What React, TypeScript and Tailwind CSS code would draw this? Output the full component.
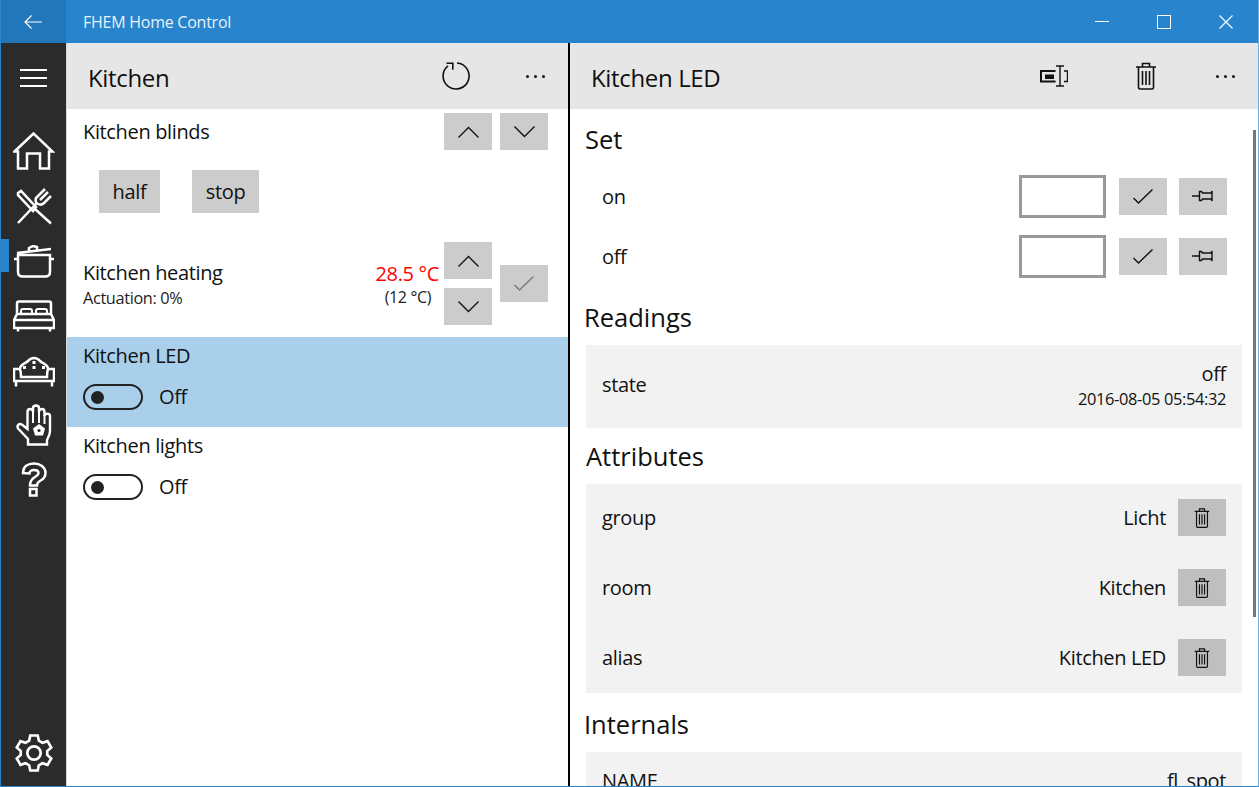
import { ReactNode } from "react";

const font = "font-['Open_Sans','Noto_Sans',sans-serif]";

const Icon = ({ className, children, vb = "0 0 48 48" }: { className: string; children: ReactNode; vb?: string }) => (
  <svg viewBox={vb} fill="none" stroke="currentColor" className={className}>
    {children}
  </svg>
);

const TrashIcon = ({ className }: { className: string }) => (
  <Icon className={className} vb="0 0 22 28">
    <path strokeWidth="1.6" d="M1 5h20M7.500 5V1.500h7V5M3.500 5v20.500a1.500 1.500 0 0 0 1.500 1.500h12a1.500 1.500 0 0 0 1.500-1.500V5" />
    <path strokeWidth="1.6" d="M7.500 9v14M11 9v14M14.500 9v14" />
  </Icon>
);

const PinIcon = () => (
  <Icon className="w-[22px] h-[14px]" vb="0 0 22 14">
    <path strokeWidth="1.4" d="M0 7h7M7.500 2.500h2l1 1.500h8.500l1-2v10l-1-2h-8.500l-1 1.500h-2z" />
  </Icon>
);

const CheckIcon = ({ muted }: { muted?: boolean }) => (
  <Icon className={`w-[20px] h-[15px] ${muted ? "text-[#7a7a7a]" : ""}`} vb="0 0 20 15">
    <path strokeWidth="1.4" d="M0.500 9l5 5L19.500 0.500" />
  </Icon>
);

const Chevron = ({ up }: { up?: boolean }) => (
  <Icon className="w-[21px] h-[12px]" vb="0 0 21 12">
    <path strokeWidth="1.4" d={up ? "M0.500 11.500l10-10 10 10" : "M0.500 0.500l10 10 10-10"} />
  </Icon>
);

const GreyButton = ({ children, className = "bg-[#cccccc]" }: { children: ReactNode; className?: string }) => (
  <div className={`w-12 h-[37px] flex items-center justify-center shrink-0 ${className}`}>{children}</div>
);

const Dots = () => (
  <div className="flex gap-[5px]">
    <span className="w-[3px] h-[3px] rounded-full bg-[#111]" />
    <span className="w-[3px] h-[3px] rounded-full bg-[#111]" />
    <span className="w-[3px] h-[3px] rounded-full bg-[#111]" />
  </div>
);

const Toggle = () => (
  <div className="flex items-center gap-[16px]">
    <div className="w-[60px] h-[26px] rounded-full border-[2.500px] border-[#222] flex items-center pl-[6px]">
      <span className="w-[13px] h-[13px] rounded-full bg-[#222]" />
    </div>
    <span className="text-[20px] leading-none text-[#111]">Off</span>
  </div>
);

const sw = "2.5";

const HomeIcon = () => (
  <Icon className="w-[42px] h-[38px]" vb="0 0 42 38">
    <path strokeWidth={sw} d="M1.500 19.500L20.500 1.500l19 18H36v17h-9V21.500H14v15H5v-17z" />
  </Icon>
);

const FoodIcon = () => (
  <Icon className="w-[36px] h-[37px] mt-[18px]" vb="0 0 36 37">
    <path strokeWidth={sw} d="M2 5l3-2 15 16-3 4L2 7zM19 21l16 14.500" />
    <path strokeWidth={sw} d="M29 1l-9 9c-1 3 0 5 2 6s4 1 6-1l7-7M32 4l-8 8M21 15L2 35" />
  </Icon>
);

const PotIcon = () => (
  <Icon className="w-[40px] h-[33px] mt-[20px]" vb="0 0 40 33">
    <path strokeWidth={sw} d="M4 10h32v17c0 3-2 4.500-5 4.500H9c-3 0-5-1.500-5-4.500zM0 14h4M36 14h4M3 8l34-4M15 6V3l4-2 4 1v3" />
  </Icon>
);

const BedIcon = () => (
  <Icon className="w-[42px] h-[32px] mt-[22px]" vb="0 0 42 32">
    <path strokeWidth={sw} d="M4 14V3.500c0-1.200 1-2 2-2h30c1 0 2 .8 2 2V14M4 14h34l3 6v8H1v-8zM1 20h40M5 28v3.500M37 28v3.500" />
    <path strokeWidth="2" d="M8 14v-3c0-1 1-2 2-2h7c1 0 2 1 2 2v3M23 14v-3c0-1 1-2 2-2h7c1 0 2 1 2 2v3" />
  </Icon>
);

const SofaIcon = () => (
  <Icon className="w-[42px] h-[32px] mt-[23px]" vb="0 0 42 32">
    <path strokeWidth={sw} d="M7 14c0-5 5-5 8-8 3-4 9-4 12 0 3 3 8 3 8 8M1 14h6c1 3 1 5 1 8h26c0-3 0-5 1-8h6v12H1zM3 26v5.500M39 26v5.500" />
    <path fill="currentColor" stroke="none" d="M10 11h3v3h-3zM19.500 11h3v3h-3zM29 11h3v3h-3zM19.500 6h3v3h-3z" />
  </Icon>
);

const HandIcon = () => (
  <Icon className="w-[36px] h-[42px] mt-[17px]" vb="0 0 36 42">
    <path strokeWidth="2.400" d="M12 40.500V35L2.500 25C0 22 3 18.500 6.500 21l5 4V8c0-4 5.500-4 5.500 0V4.500c0-4 6-4 6 0V8c0-4 5.500-4 5.500 0v4c0-3 5.500-3 5.500 0v15c0 4-2 7-3 9v4.500z" />
    <path strokeWidth="2" d="M17 8v11M23 6v13M28.500 11v9" />
    <path fill="currentColor" stroke="none" d="M23 20l6 4.500-2 7h-8l-2-7z" />
    <circle cx="23" cy="26.500" r="1.600" fill="#2b2b2b" stroke="none" />
  </Icon>
);

const HelpIcon = () => (
  <Icon className="w-[26px] h-[35px] mt-[16px]" vb="0 0 26 35">
    <path strokeWidth={sw} d="M2 11C2 4.500 7 1.500 13 1.500S24.500 5 24.500 11c0 4-2.500 6.500-5.500 8-2 1-3 2-3 4.500H9c0-4.500 1.500-6.500 5-8.500 2.500-1.500 3.500-2.500 3.500-4 0-2-2-3-4.500-3s-4.500 1.500-4.500 3.500z" />
    <path strokeWidth={sw} d="M9 27h6.500v6.500H9z" />
  </Icon>
);

const SectionTitle = ({ children, className = "" }: { children: ReactNode; className?: string }) => (
  <div className={`text-[25.500px] tracking-normal leading-[32px] text-[#111] ${className}`}>{children}</div>
);

const attributes = [
  { name: "group", value: "Licht" },
  { name: "room", value: "Kitchen" },
  { name: "alias", value: "Kitchen LED" },
];

const setRows = ["on", "off"];

export default function App() {
  return (
    <div className={`${font} tracking-[-0.35px] w-[1259px] h-[787px] overflow-hidden flex flex-col border border-[#2a84cc] border-r-[#6aaee2] border-t-0 bg-white text-[#111]`}>
      {/* Title bar */}
      <div className="h-[43px] flex items-center bg-[#2884cc] text-white shrink-0">
        <div className="w-[65px] h-full bg-[#2277bb] flex items-center justify-center pr-[2px]">
          <Icon className="w-[18px] h-[14px]" vb="0 0 18 14">
            <path strokeWidth="1.2" d="M18 7H1M7.500 0.500L1 7l6.500 6.500" />
          </Icon>
        </div>
        <span className="ml-[17px] text-[16px] tracking-[-0.25px] text-[#e6f1fa]">FHEM Home Control</span>
        <div className="ml-auto flex items-center gap-[48px] pr-[25px]">
          <span className="w-[14px] h-px bg-white" />
          <span className="w-[14px] h-[14px] border border-white" />
          <Icon className="w-[14px] h-[14px]" vb="0 0 14 14">
            <path strokeWidth="1.1" d="M0.500 0.500l13 13M13.500 0.500l-13 13" />
          </Icon>
        </div>
      </div>

      <div className="flex-1 flex min-h-0">
        {/* Sidebar */}
        <div className="w-[65px] bg-[#2b2b2b] text-white flex flex-col items-center shrink-0 relative">
          <div className="flex flex-col gap-[6px] mt-[26px]">
            <span className="w-[27px] h-[2px] bg-white" />
            <span className="w-[27px] h-[2px] bg-white" />
            <span className="w-[27px] h-[2px] bg-white" />
          </div>
          <div className="flex flex-col items-center mt-[45px]">
            <HomeIcon />
            <FoodIcon />
            <PotIcon />
            <BedIcon />
            <SofaIcon />
            <HandIcon />
            <HelpIcon />
          </div>
          <div className="absolute left-0 top-[196px] w-[8px] h-[33px] bg-[#2884cc]" />
          <div className="mt-auto mb-[13px]">
            <Icon className="w-[40px] h-[40px]">
              <path strokeWidth="3.200" d="M19.500 3h9l1.300 6.300 4.400 2.500 6-2 4.500 7.700-4.800 4.200v4.600l4.800 4.200-4.500 7.700-6-2-4.400 2.500-1.300 6.300h-9l-1.300-6.300-4.400-2.500-6 2-4.500-7.700 4.800-4.200v-4.600l-4.800-4.200 4.500-7.700 6 2 4.400-2.500z" />
              <circle cx="24" cy="24" r="8" strokeWidth="3.200" />
            </Icon>
          </div>
        </div>

        {/* List panel */}
        <div className="w-[504px] shrink-0 flex flex-col border-r-2 border-black border-l border-l-[#d8d8d8]">
          <div className="h-[66px] bg-[#e6e6e6] flex items-center shrink-0">
            <span className="ml-[21px] mt-[3px] text-[24px]">Kitchen</span>
            <Icon className="ml-auto w-[28px] h-[28px]" vb="0 0 28 28">
              <path strokeWidth="1.600" d="M15 1A13 13 0 1 1 6 3.800M4.500 1.200h6.300v6.500" />
            </Icon>
            <div className="ml-[56px] mr-[23px]"><Dots /></div>
          </div>

          {/* Blinds */}
          <div className="h-[228px] shrink-0 relative">
            <div className="flex items-start pt-[4px] pr-[20px]">
              <span className="ml-[16px] mt-[7px] text-[20px] leading-[24px]">Kitchen blinds</span>
              <GreyButton className="ml-auto bg-[#cccccc]"><Chevron up /></GreyButton>
              <GreyButton className="ml-[8px] bg-[#cccccc]"><Chevron /></GreyButton>
            </div>
            <div className="flex gap-[32px] ml-[32px] mt-[20px]">
              <div className="w-[61px] h-[43px] bg-[#cccccc] flex items-center justify-center text-[20px]">half</div>
              <div className="w-[67px] h-[43px] bg-[#cccccc] flex items-center justify-center text-[20px]">stop</div>
            </div>
            {/* Heating */}
            <div className="flex mt-[29px] pr-[20px]">
              <div className="ml-[16px] mt-[19px]">
                <div className="text-[20px] leading-[24px]">Kitchen heating</div>
                <div className="text-[16.300px] leading-[26px] text-[#222]">Actuation: 0%</div>
              </div>
              <div className="ml-auto mt-[20px] flex flex-col items-end mr-[5px]">
                <div className="text-[20px] leading-[24px] text-[#ff0000]">28.5 °C</div>
                <div className="text-[16px] leading-[22px] text-[#222] mr-[8px]">(12 °C)</div>
              </div>
              <div className="flex flex-col gap-[9px]">
                <GreyButton><Chevron up /></GreyButton>
                <GreyButton><Chevron /></GreyButton>
              </div>
              <GreyButton className="ml-[8px] mt-[23px] bg-[#cccccc]"><CheckIcon muted /></GreyButton>
            </div>
          </div>

          <div className="h-[90px] bg-[#a9cfeb] pl-[16px] pt-[5px] shrink-0">
            <div className="text-[20px] leading-[27px] mb-[15px]">Kitchen LED</div>
            <Toggle />
          </div>
          <div className="h-[90px] pl-[16px] pt-[5px] shrink-0">
            <div className="text-[20px] leading-[27px] mb-[15px]">Kitchen lights</div>
            <Toggle />
          </div>
        </div>

        {/* Detail panel */}
        <div className="flex-1 min-w-0 flex flex-col relative">
          <div className="h-[66px] bg-[#e6e6e6] flex items-center shrink-0">
            <span className="ml-[21px] mt-[3px] text-[24px]">Kitchen LED</span>
            <Icon className="ml-auto w-[28px] h-[22px]" vb="0 0 28 22">
              <path strokeWidth="2" d="M15.500 6H1v10.500h14.500" />
              <path strokeWidth="1.400" d="M20 1v20M16 1h8M16 21h8M24 6h3.500v10.500H24" />
              <path fill="currentColor" stroke="none" d="M5 9.500h9v4.500H5z" />
            </Icon>
            <TrashIcon className="ml-[67px] w-[22px] h-[28px]" />
            <div className="ml-[59px] mr-[23px]"><Dots /></div>
          </div>

          <div className="flex-1 min-h-0 overflow-hidden pl-[15px] pr-[16px]">
            <SectionTitle className="mt-[14px]">Set</SectionTitle>
            <div className="mt-[11px]">
              {setRows.map((row) => (
                <div key={row} className="h-[60px] flex items-center pl-[17px] pr-[15px]">
                  <span className="text-[20px] mt-[2px]">{row}</span>
                  <div className="ml-auto w-[87px] h-[43px] border-[3px] border-[#999] bg-white" />
                  <GreyButton className="ml-[13px] bg-[#cccccc]"><CheckIcon /></GreyButton>
                  <GreyButton className="ml-[12px] bg-[#cccccc]"><PinIcon /></GreyButton>
                </div>
              ))}
            </div>
            <SectionTitle className="mt-[15px] -ml-[1px]">Readings</SectionTitle>
            <div className="mt-[12px] ml-[1px] h-[83px] pb-[2px] bg-[#f2f2f2] flex items-center justify-between pl-[16px] pr-[16px]">
              <span className="text-[20px] mb-[2px]">state</span>
              <div className="text-right">
                <div className="text-[20px] leading-[26px]">off</div>
                <div className="text-[16.400px] leading-[24px]">2016-08-05 05:54:32</div>
              </div>
            </div>
            <SectionTitle className="mt-[12px] ml-[1px]">Attributes</SectionTitle>
            <div className="mt-[12px] ml-[1px] h-[209px] bg-[#f2f2f2] pt-[15px] flex flex-col gap-[33px]">
              {attributes.map((a) => (
                <div key={a.name} className="h-[37px] flex items-center pl-[16px] pr-[16px]">
                  <span className="text-[20px] mt-[1px]">{a.name}</span>
                  <span className="ml-auto text-[20px] mr-[12px] mt-[1px]">{a.value}</span>
                  <GreyButton className="bg-[#bfbfbf]"><TrashIcon className="w-[16px] h-[22px]" /></GreyButton>
                </div>
              ))}
            </div>
            <SectionTitle className="mt-[15px] -ml-[1px]">Internals</SectionTitle>
            <div className="mt-[12px] ml-[1px] h-[80px] bg-[#f2f2f2] flex justify-between pl-[16px] pr-[16px] pt-[15px]">
              <span className="text-[20px] leading-[27px]">NAME</span>
              <span className="text-[20px] leading-[27px]">fl_spot</span>
            </div>
          </div>
          <div className="absolute right-[2px] top-[87px] w-[3px] h-[487px] bg-[#777]" />
        </div>
      </div>
    </div>
  );
}
